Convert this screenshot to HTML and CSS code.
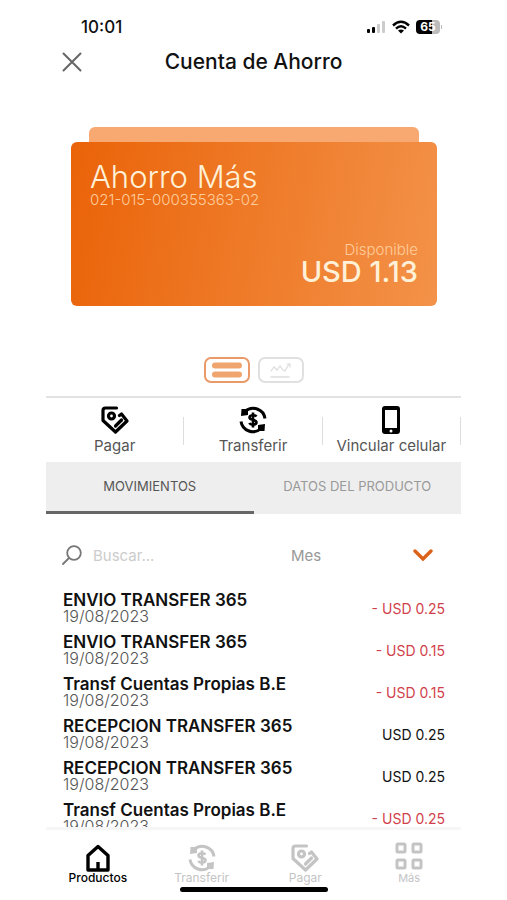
FILE: index.html
```html
<!DOCTYPE html>
<html lang="es">
<head>
<meta charset="utf-8">
<meta name="viewport" content="width=device-width, initial-scale=1">
<title>Cuenta de Ahorro</title>
<link rel="stylesheet" href="styles.css">
</head>
<body>
<svg class="sprite" aria-hidden="true">
  <symbol id="tag" viewBox="0 0 28 28">
    <g fill="none" stroke="currentColor" stroke-width="3.200" stroke-linejoin="round" stroke-linecap="round">
      <path d="M15.500 2L4.500 2Q2 2 2 4.500V14.500L14.500 26L26 15L20.500 8L18.500 9.500"/>
      <circle cx="10.500" cy="10" r="3"/>
      <path d="M14.500 20L20.500 14"/>
    </g>
  </symbol>
  <symbol id="transfer" viewBox="0 0 28 28">
    <g fill="none" stroke="currentColor" stroke-width="3">
      <path d="M6 5.500A12 12 0 0 1 26 12.500"/>
      <path d="M22 22.500A12 12 0 0 1 2 15.500"/>
      <path d="M17.500 10.500C16 8.500 10.500 8.800 10.500 11.500C10.500 14.500 17.500 13 17.500 16.300C17.500 19.300 11.500 19.300 10.300 17M14 6.500V21.500" stroke-width="2.600"/>
    </g>
    <path d="M2.500 3l6.500 0v6l-7 1zM25.500 25l-6.500 0v-6l7-1z" fill="currentColor"/>
  </symbol>
</svg>
<div class="app">
  <div class="status">
    <span class="time">10:01</span>
    <div class="indicators">
      <svg width="20" height="14" viewBox="0 0 20 14"><rect x="1" y="9" width="3" height="4" rx="1"/><rect x="6" y="7" width="3" height="6" rx="1"/><rect x="11" y="4" width="3" height="9" rx="1" fill="#ccc"/><rect x="16" y="1" width="3" height="12" rx="1" fill="#ccc"/></svg>
      <svg width="18" height="14" viewBox="0 0 18 14"><g fill="none" stroke="#000" stroke-width="2.400"><path d="M1 5.500Q9-2 17 5.500"/><path d="M4 8.700Q9 4 14 8.700"/></g><path d="M6 10.500Q9 8.300 12 10.500L9 13.500z"/></svg>
      <span class="battery">65</span>
    </div>
  </div>
  <header class="header">
    <button class="close" aria-label="Cerrar"><svg width="20" height="20" viewBox="0 0 20 20"><path d="M1.500 1.500l17 17M18.500 1.500l-17 17" stroke="#666" stroke-width="2" stroke-linecap="round"/></svg></button>
    <h1>Cuenta de Ahorro</h1>
  </header>
  <section class="account">
    <div class="card-back"></div>
    <div class="card">
      <div>
        <h2>Ahorro Más</h2>
        <p class="number">021-015-000355363-02</p>
      </div>
      <div class="balance">
        <p class="label">Disponible</p>
        <p class="amount">USD 1.13</p>
      </div>
    </div>
  </section>
  <div class="views">
    <button class="view active" aria-label="Lista"><svg width="32" height="20" viewBox="0 0 32 20"><path d="M4 5.500h24M4 14.500h24" stroke="#f0a56e" stroke-width="6" stroke-linecap="round"/></svg></button>
    <button class="view" aria-label="Gráfico"><svg width="24" height="20" viewBox="0 0 24 20" fill="none" stroke="#ddd" stroke-linecap="round"><path d="M2 11l3-4 3 3 3-4 3 4 2 1 4-7M18 4h3v3" stroke-width="1.200"/><path d="M2 17h18" stroke-width="1.600"/></svg></button>
  </div>
  <div class="actions">
    <button><svg width="28" height="28"><use href="#tag"/></svg>Pagar</button>
    <span class="rule"></span>
    <button><svg width="28" height="28"><use href="#transfer"/></svg>Transferir</button>
    <span class="rule"></span>
    <button><svg width="28" height="28" viewBox="0 0 28 28"><rect x="5" y="0" width="18" height="28" rx="3"/><rect x="8" y="4" width="12" height="18" fill="#fff"/><circle cx="14" cy="25" r="1.500" fill="#fff"/></svg>Vincular celular</button>
    <span class="rule"></span>
  </div>
  <div class="tabs" role="tablist">
    <button role="tab" aria-selected="true">MOVIMIENTOS</button>
    <button role="tab" aria-selected="false">DATOS DEL PRODUCTO</button>
  </div>
  <div class="filters">
    <svg width="20" height="20" viewBox="0 0 20 20" fill="none" stroke="#777" stroke-width="1.800" stroke-linecap="round"><circle cx="12" cy="8" r="6.800"/><path d="M7 13l-6 6"/></svg>
    <input type="text" placeholder="Buscar..." aria-label="Buscar movimientos">
    <select aria-label="Periodo"><option>Mes</option></select>
    <svg class="chevron" width="20" height="12" viewBox="0 0 20 12" fill="none" stroke="#dc6119" stroke-width="3.400" stroke-linecap="round"><path d="M2 2l8 8 8-8"/></svg>
  </div>
  <ul class="movements">
    <li><div><h3>ENVIO TRANSFER 365</h3><time>19/08/2023</time></div><span class="out">- USD 0.25</span></li>
    <li><div><h3>ENVIO TRANSFER 365</h3><time>19/08/2023</time></div><span class="out">- USD 0.15</span></li>
    <li><div><h3>Transf Cuentas Propias B.E</h3><time>19/08/2023</time></div><span class="out">- USD 0.15</span></li>
    <li><div><h3>RECEPCION TRANSFER 365</h3><time>19/08/2023</time></div><span>USD 0.25</span></li>
    <li><div><h3>RECEPCION TRANSFER 365</h3><time>19/08/2023</time></div><span>USD 0.25</span></li>
    <li><div><h3>Transf Cuentas Propias B.E</h3><time>19/08/2023</time></div><span class="out">- USD 0.25</span></li>
  </ul>
  <nav class="nav">
    <a href="#" class="current"><svg width="26" height="28" viewBox="0 0 26 28" fill="none" stroke="currentColor" stroke-width="3.400"><path d="M3 11.500V26H23V11.500L13 2.500z" stroke-linejoin="round"/><path d="M13 26v-8"/></svg>Productos</a>
    <a href="#"><svg width="28" height="28"><use href="#transfer"/></svg>Transferir</a>
    <a href="#"><svg width="28" height="28"><use href="#tag"/></svg>Pagar</a>
    <a href="#" class="more"><svg width="28" height="28" viewBox="0 0 28 28" fill="none" stroke="currentColor" stroke-width="3"><rect x="2" y="2" width="8" height="8" rx="1"/><rect x="18" y="2" width="8" height="8" rx="1"/><rect x="2" y="18" width="8" height="8" rx="1"/><rect x="18" y="18" width="8" height="8" rx="1"/></svg>Más</a>
    <span class="home"></span>
  </nav>
</div>
</body>
</html>
```
FILE: styles.css
```css
* { box-sizing: border-box; }
body { margin: 0; background: #fff; color: #111; font-family: Inter, "Liberation Sans", sans-serif; }
h1, h2, h3, p, ul { margin: 0; padding: 0; }
button, input, select { font: inherit; color: inherit; border: 0; background: none; padding: 0; margin: 0; border-radius: 0; }
svg { display: block; flex: none; }
.sprite { position: absolute; width: 0; height: 0; }
.app { display: flex; flex-direction: column; height: 100vh; padding: 0 46px; }
.status { display: flex; justify-content: space-between; align-items: center; height: 42px; padding: 12px 21px 0 35px; }
.time { font-size: 17px; font-weight: 500; }
.indicators { display: flex; align-items: center; gap: 6px; }
.battery { position: relative; width: 24px; height: 14px; border-radius: 4px; background: linear-gradient(90deg, #000 65%, #bbb 65%); color: #fff; font-size: 12px; font-weight: 700; line-height: 14px; text-align: center; }
.battery::after { content: ""; position: absolute; left: 25px; top: 5px; width: 1px; height: 4px; background: #bbb; }
.header { display: grid; grid-template-columns: 20px 1fr 20px; align-items: center; height: 40px; padding: 0 16px; }
h1 { font-size: 21px; line-height: 24px; font-weight: 500; text-align: center; }
.account { padding: 45px 24px 0 25px; }
.card-back { height: 15px; margin: 0 18px; border-radius: 6px 6px 0 0; background: #f7a971; }
.card { display: flex; flex-direction: column; justify-content: space-between; height: 164px; padding: 20px 19px; border-radius: 6px; background: linear-gradient(100deg, #ea6308, #f39249); color: #fff1d8; }
.card h2 { font-size: 31px; line-height: 30px; font-weight: 300; }
.number, .label { font-size: 15px; line-height: 16px; font-weight: 300; color: #ffcd9c; }
.balance { text-align: right; }
.amount { font-size: 29px; line-height: 28px; font-weight: 500; }
.views { display: flex; justify-content: center; gap: 8px; padding: 51px 0 13px; }
.view { display: grid; place-items: center; width: 46px; height: 26px; border: 2px solid #e0e0e0; border-radius: 7px; }
.view.active { border-color: #e99a68; }
.actions { display: flex; align-items: center; height: 66px; padding-top: 2px; border-top: 2px solid #e2e2e2; }
.actions button { flex: 1 1 0; display: flex; flex-direction: column; align-items: center; gap: 2px; font-size: 15px; line-height: 20px; color: #555; white-space: nowrap; }
.actions svg { color: #000; }
.rule { width: 1px; height: 28px; background: #ddd; }
.tabs { display: grid; grid-template-columns: 1fr 1fr; height: 52px; background: #eee; }
.tabs button { padding-bottom: 2px; border-bottom: 3px solid transparent; font-size: 13px; color: #999; }
.tabs button[aria-selected="true"] { border-color: #666; color: #555; }
.filters { display: flex; align-items: center; height: 73px; padding: 9px 28px 0 16px; }
.filters input { flex: 1; min-width: 0; margin-left: 11px; font-size: 15px; outline: 0; }
.filters input::placeholder { color: #ccc; }
.filters select { appearance: none; width: 122px; font-size: 15px; color: #999; }
.movements { flex: 1; min-height: 0; overflow: hidden; list-style: none; padding: 0 16px 0 17px; }
.movements li { display: flex; justify-content: space-between; align-items: center; height: 42px; font-size: 14px; }
h3 { font-size: 17px; line-height: 16px; font-weight: 600; }
time { display: block; font-size: 16px; line-height: 16px; font-weight: 300; color: #555; }
.out { color: #d13f4b; }
.nav { position: relative; display: grid; grid-template-columns: repeat(4, 1fr); height: 73px; padding-top: 14px; border-top: 3px solid #f6f6f6; }
.nav a { display: flex; flex-direction: column; align-items: center; font-size: 12px; line-height: 12px; color: #c4c4c4; text-decoration: none; }
.nav .current { color: #000; font-weight: 500; }
.nav .more { gap: 2px; font-size: 11px; }
.nav .more svg { margin-top: -2px; }
.home { position: absolute; bottom: 8px; left: 50%; width: 148px; height: 5px; margin-left: -74px; border-radius: 3px; background: #000; }
```
